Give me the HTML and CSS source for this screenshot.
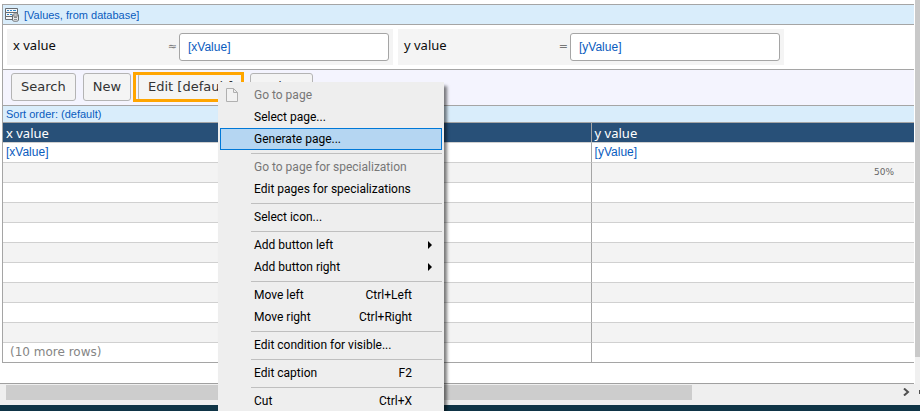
FILE: index.html
```html
<!DOCTYPE html>
<html lang="en">
<head>
<meta charset="utf-8">
<title>Values</title>
<link rel="stylesheet" href="styles.css">
</head>
<body>
<div class="workspace">
  <main class="canvas">
    <section class="panel">
      <header class="title">
        <svg class="title-icon" width="15" height="15" viewBox="0 0 15 15" fill="none" stroke="#686c70">
          <path d="M.5 1.500h12v4H.5zM.5 5.500h12v4H.5zM7 12.500H.5v-3h6" fill="#f4f7fa"/>
          <path d="M2 3.500h2M5 3.500h2M8 3.500h3M2 7.500h2M5 7.500h2" stroke="#2f88cc"/>
          <path d="M7.500 8v5c0 1.800 6 1.800 6 0V8" fill="#e4e6e8"/>
          <ellipse cx="10.500" cy="8" rx="3" ry="1.200" fill="#e4e6e8"/>
          <path d="M9 10.500h3M9 12.500h3" stroke="#8a8e92"/>
        </svg>
        <span>[Values, from database]</span>
      </header>
      <form class="criteria">
        <div class="field"><label for="xv">x value</label><span class="operator">≈</span><input id="xv" type="text" value="[xValue]"></div>
        <div class="field"><label for="yv">y value</label><span class="operator">=</span><input id="yv" type="text" value="[yValue]"></div>
      </form>
      <div class="toolbar">
        <button type="button">Search</button>
        <button type="button">New</button>
        <button type="button" class="selected">Edit [default]</button>
        <button type="button">Delete</button>
      </div>
      <div class="sort">Sort order: (default)</div>
      <table class="grid">
        <thead><tr><th>x value</th><th>y value</th></tr></thead>
        <tbody>
          <tr><td>[xValue]</td><td>[yValue]</td></tr>
          <tr><td></td><td class="share">50%</td></tr>
          <tr><td></td><td></td></tr>
          <tr><td></td><td></td></tr>
          <tr><td></td><td></td></tr>
          <tr><td></td><td></td></tr>
          <tr><td></td><td></td></tr>
          <tr><td></td><td></td></tr>
          <tr><td></td><td></td></tr>
          <tr><td></td><td></td></tr>
          <tr><td class="more">(10 more rows)</td><td></td></tr>
        </tbody>
      </table>
    </section>
  </main>
  <div class="vscroll"><div class="vthumb"></div></div>
</div>
<div class="hscroll">
  <div class="hthumb"></div>
  <svg class="arrow" width="7" height="8" viewBox="0 0 7 8" fill="none" stroke="#505050" stroke-width="2"><path d="M1 .5 5 4 1 7.500"/></svg>
  <svg width="2" height="8" viewBox="0 0 2 8"><path d="M1 2h1v4H1z" fill="#505050"/></svg>
</div>
<footer class="status"></footer>

<div class="menu" role="menu">
  <button type="button" role="menuitem" disabled>
    <svg class="page-icon" width="12" height="14" viewBox="0 0 12 14" fill="#f2f2f2" stroke="#b0b0b0"><path d="M.5 .5h7l4 4v9H.5zM7.500 .5v4h4"/></svg>
    <span>Go to page</span></button>
  <button type="button" role="menuitem"><span>Select page...</span></button>
  <button type="button" role="menuitem" class="active"><span>Generate page...</span></button>
  <hr>
  <button type="button" role="menuitem" disabled><span>Go to page for specialization</span></button>
  <button type="button" role="menuitem"><span>Edit pages for specializations</span></button>
  <hr>
  <button type="button" role="menuitem"><span>Select icon...</span></button>
  <hr>
  <button type="button" role="menuitem" class="parent"><span>Add button left</span><svg width="4" height="8" viewBox="0 0 4 8"><path d="M0 0v8l4-4z"/></svg></button>
  <button type="button" role="menuitem" class="parent"><span>Add button right</span><svg width="4" height="8" viewBox="0 0 4 8"><path d="M0 0v8l4-4z"/></svg></button>
  <hr>
  <button type="button" role="menuitem"><span>Move left</span><kbd>Ctrl+Left</kbd></button>
  <button type="button" role="menuitem"><span>Move right</span><kbd>Ctrl+Right</kbd></button>
  <hr>
  <button type="button" role="menuitem"><span>Edit condition for visible...</span></button>
  <hr>
  <button type="button" role="menuitem"><span>Edit caption</span><kbd>F2</kbd></button>
  <hr>
  <button type="button" role="menuitem"><span>Cut</span><kbd>Ctrl+X</kbd></button>
</div>
</body>
</html>
```
FILE: styles.css
```css
* { box-sizing: border-box; }
body {
  margin: 0;
  height: 100vh;
  overflow: hidden;
  position: relative;
  display: flex;
  flex-direction: column;
  background: #fff;
  font: 12px/16px "Liberation Sans", Arial, sans-serif;
  color: #0c0c0c;
}
button, input { font: inherit; color: inherit; margin: 0; }
.workspace { flex: 1; min-height: 0; display: flex; }
.canvas { flex: 1; padding: 4px 0 0 2px; border-bottom: 1px solid #a0a0a0; overflow: hidden; }
.panel { border: 1px solid #a5a5a5; border-right: 0; }
.title {
  display: flex;
  align-items: center;
  gap: 4px;
  height: 20px;
  padding-left: 2px;
  background: #d9edfb;
  border-bottom: 1px solid #a5a5a5;
  color: #0a5cbe;
  font-size: 11px;
}
.criteria { display: flex; gap: 5px; padding: 4px; border-bottom: 1px solid #a5a5a5; }
.field {
  display: flex;
  align-items: center;
  width: 386px;
  height: 36px;
  padding: 4px 4px 4px 6px;
  background: #f4f4f4;
  font: 13px/20px "Noto Sans", Verdana, sans-serif;
}
.field label { flex: 1; padding-bottom: 4px; }
.operator { padding-right: 2px; color: #777; font: 11px/16px "DejaVu Sans", sans-serif; }
.field input {
  width: 210px;
  height: 28px;
  padding: 0 8px;
  border: 1px solid #a5a5a5;
  border-radius: 3px;
  background: #fff;
  color: #0a5cbe;
  font: 12px/16px "Liberation Sans", Arial, sans-serif;
}
.toolbar {
  display: flex;
  gap: 7px;
  padding: 3px 8px 4px;
  background: #f4f4fe;
  border-bottom: 1px solid #a5a5a5;
}
.toolbar button {
  height: 28px;
  padding: 0 9px;
  border: 1px solid #b4b4b4;
  border-radius: 3px;
  background: #f4f4f4;
  color: #333;
  font: 13px/20px "DejaVu Sans", Verdana, sans-serif;
  white-space: nowrap;
}
.toolbar .selected { position: relative; }
.toolbar .selected::after {
  content: "";
  position: absolute;
  inset: -2px -2px -2px -6px;
  border: 3px solid #ffa500;
}
.sort { height: 17px; padding-left: 3px; background: #d9edfb; border-bottom: 1px solid #a5a5a5; color: #0a5cbe; font-size: 11px; }
.grid { width: 100%; table-layout: fixed; border-collapse: separate; border-spacing: 0; }
.grid th, .grid td { height: 20px; padding: 0 3px; border-bottom: 1px solid #d0d0d0; line-height: 16px; text-align: left; }
.grid th:first-child { width: 64.5%; }
.grid th { background: #285078; color: #fff; font: 13px/18px "Noto Sans", Verdana, sans-serif; }
.grid td { padding-bottom: 2px; color: #0a5cbe; }
.grid th + th, .grid td + td { border-left: 1px solid #a5a5a5; }
.grid tbody tr:nth-child(even) { background: #f3f3f3; }
.grid tbody tr:last-child td { border-bottom: 0; height: 19px; }
.grid .share { padding-right: 20px; text-align: right; color: #666; font: 9px/16px "DejaVu Sans", sans-serif; }
.grid .more { padding-left: 7px; color: #858585; font: 12px/16px "DejaVu Sans", Verdana, sans-serif; }
.vscroll { width: 6px; background: #f0f0f0; border-left: 1px solid #fff; }
.vthumb { height: 357px; background: #c9c9c9; }
.hscroll { display: flex; height: 21px; padding: 1px 0 5px 6px; background: #efefef; }
.hthumb { width: 75%; background: #cdcdcd; }
.arrow { margin: 3px 8px 0 auto; }
.hscroll svg:last-child { margin-top: 3px; }
.status { height: 6px; background: #0f3446; }

.menu {
  position: absolute;
  left: 218px;
  top: 82px;
  width: 226px;
  padding: 2px;
  background: #eee;
  box-shadow: 3px 4px 3px rgba(0, 0, 0, .5);
}
.menu button {
  position: relative;
  display: flex;
  align-items: center;
  justify-content: space-between;
  width: 100%;
  height: 22px;
  padding: 0 29px 0 33px;
  border: 1px solid transparent;
  background: none;
  color: #000;
  font: 12px/20px Roboto, "Segoe UI", sans-serif;
  white-space: nowrap;
}
.menu button:disabled { color: #777; }
.menu .active { background: #b5d6f2; border-color: #0078d7; }
.menu .parent { padding-right: 9px; }
.menu kbd { font: inherit; }
.menu hr { height: 1px; margin: 3px 0 2px 31px; border: 0; background: #bfbfbf; }
.page-icon { position: absolute; left: 5px; top: 3px; }
```
